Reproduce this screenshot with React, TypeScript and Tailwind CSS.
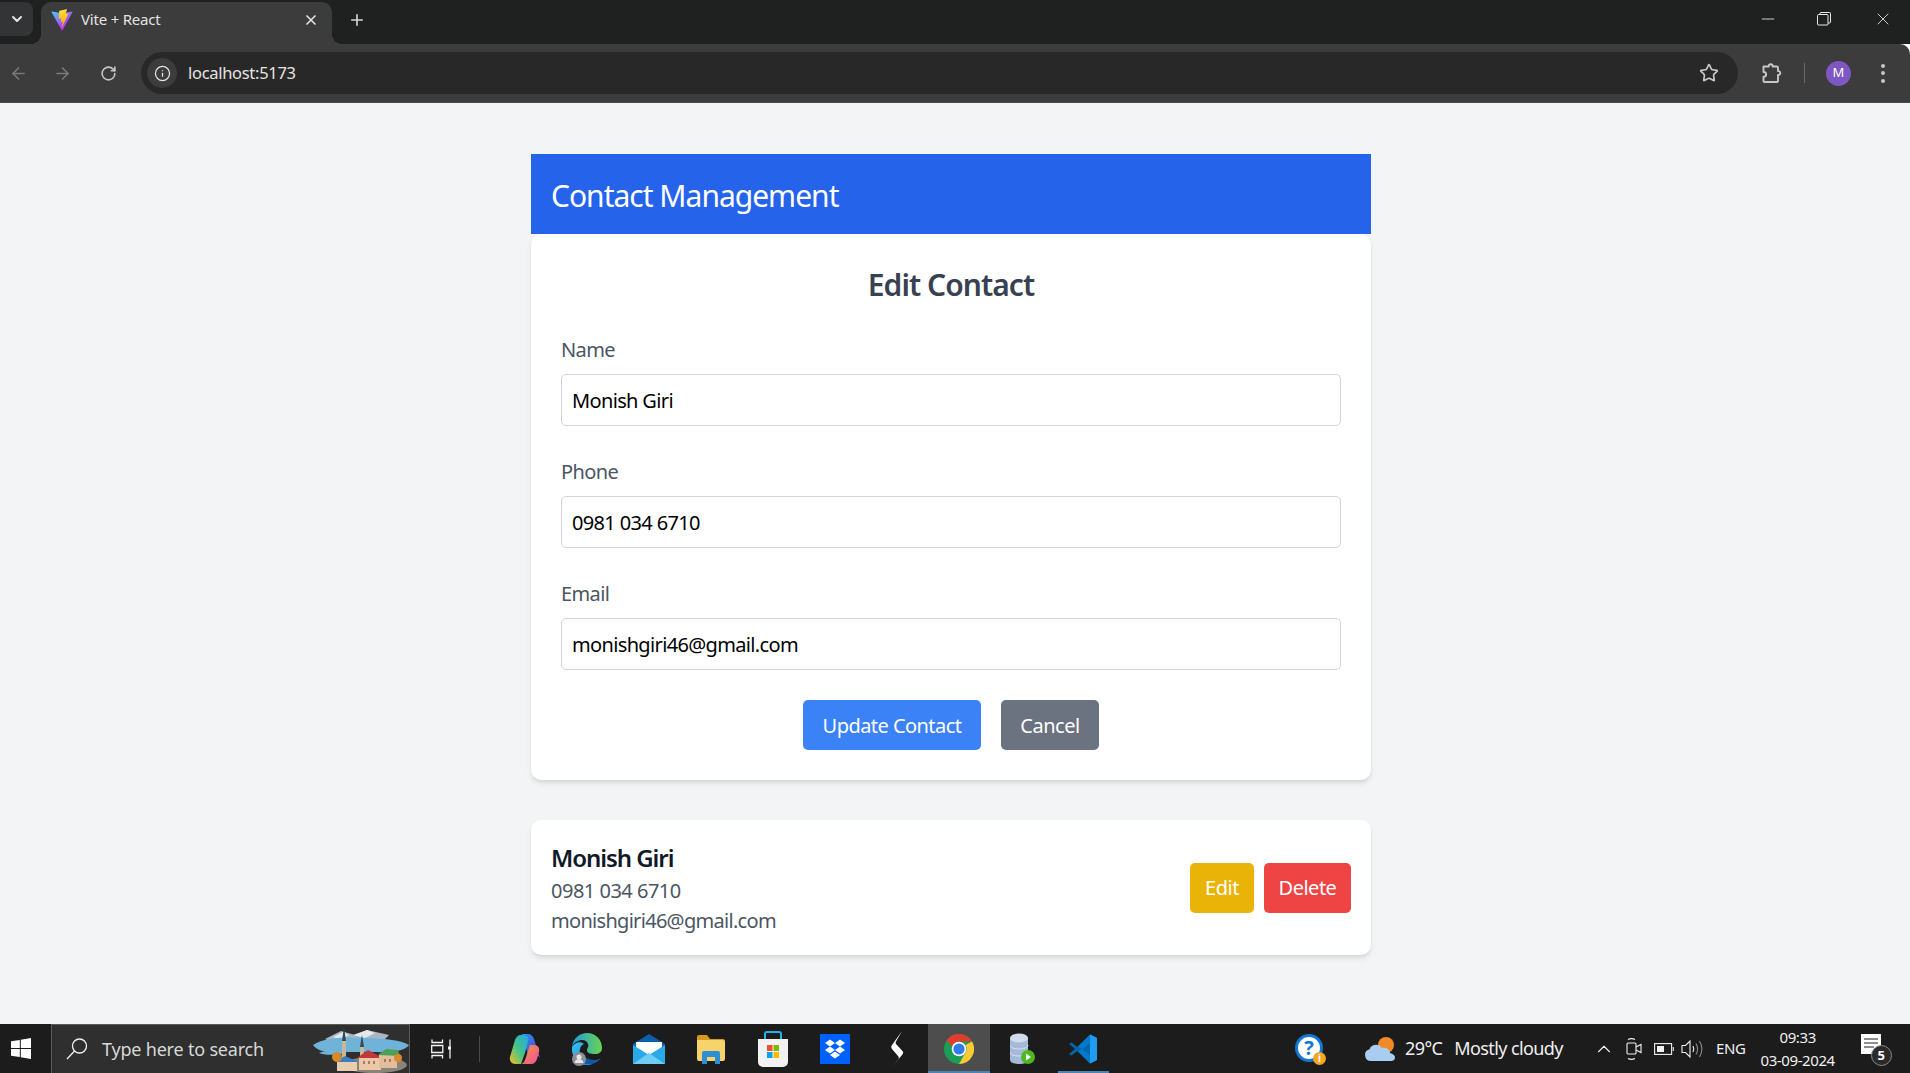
import React from 'react';
import {
  ArrowLeft,
  ArrowRight,
  ChevronDown,
  ChevronUp,
  Info,
  Minus,
  Plus,
  RotateCw,
  Star,
  X,
} from 'lucide-react';

const sans = 'font-["Noto_Sans",sans-serif]';

function ViteLogo() {
  return (
    <svg width="22" height="22" viewBox="0 0 410 404">
      <defs>
        <linearGradient id="viteA" x1="6" y1="33" x2="235" y2="344" gradientUnits="userSpaceOnUse">
          <stop offset="0" stopColor="#41D1FF" />
          <stop offset="1" stopColor="#BD34FE" />
        </linearGradient>
        <linearGradient id="viteB" x1="194" y1="8" x2="236" y2="292" gradientUnits="userSpaceOnUse">
          <stop offset="0" stopColor="#FFEA83" />
          <stop offset="0.08" stopColor="#FFDD35" />
          <stop offset="1" stopColor="#FFA800" />
        </linearGradient>
      </defs>
      <path d="M399.6 59.5L215.9 388c-3.8 6.8-13.5 6.8-17.4.1L11.2 59.5C7 52.2 13.3 43.3 21.6 44.8l183.9 32.9c1.2.2 2.4.2 3.5 0l180-32.8c8.3-1.5 14.6 7.3 10.6 14.6z" fill="url(#viteA)" />
      <path d="M292.9 1.6L156.9 28.2c-2.2.4-3.9 2.3-4 4.6l-8.4 141.2c-.2 3.3 2.8 5.9 6.1 5.1l37.9-8.7c3.5-.8 6.7 2.3 6 5.9l-11.3 55.2c-.8 3.7 2.7 6.9 6.3 5.8l23.4-7.1c3.6-1.1 7.1 2.1 6.3 5.8l-17.9 86.6c-1.1 5.4 6.1 8.4 9.1 3.7l2-3.1L323.8 87.5c1.9-3.7-1.3-8-5.4-7.2l-38.8 7.5c-3.6.7-6.7-2.7-5.7-6.3l25.4-73.8c1-3.5-2.1-6.9-5.8-6.1z" fill="url(#viteB)" />
    </svg>
  );
}

function RestoreIcon() {
  return (
    <svg width="14" height="14" viewBox="0 0 14 14" fill="none" stroke="#e8e8e8" strokeWidth="1">
      <rect x="0.5" y="2.5" width="10.5" height="10.5" rx="1" />
      <path d="M3 2.5V1.5a1 1 0 0 1 1-1h8.5a1 1 0 0 1 1 1V10a1 1 0 0 1-1 1H11" />
    </svg>
  );
}

function ExtensionIcon() {
  return (
    <svg width="22" height="22" viewBox="0 0 22 22" fill="none" stroke="#c7c7c7" strokeWidth="1.9" strokeLinejoin="round">
      <path d="M2.5 4.5h5.2c0-3 4-3 4 0h4.3a1 1 0 0 1 1 1v3.6c3-.2 3 4.1 0 3.9v6a1 1 0 0 1-1 1H3.5a1 1 0 0 1-1-1v-4.3c1.900 0 2.600-1.200 2.600-2.300S4.400 10 2.500 10z" />
    </svg>
  );
}

function WindowsLogo() {
  return (
    <svg width="20" height="21" viewBox="0 0 20 21" fill="#fff">
      <path d="M0 3.200 8.800 1.900v8H0zM9.800 1.700 20 0v9.900H9.800zM0 11h8.800v8L0 17.800zM9.800 11H20v10L9.800 19.300z" />
    </svg>
  );
}

function SearchGlass() {
  return (
    <svg width="22" height="22" viewBox="0 0 22 22" fill="none" stroke="#f0f0f0" strokeWidth="1.300">
      <circle cx="13.500" cy="8" r="7" />
      <path d="M8.500 13 1 21" />
    </svg>
  );
}

function TaskViewIcon() {
  return (
    <svg width="20" height="20" viewBox="0 0 20 20" fill="none" stroke="#f2f2f2" strokeWidth="1.300">
      <path d="M1 .5v3h10.500v-3M1 19.500v-3h10.500v3M.7 6.500h11.100v7H.7zM19 .5v19" />
      <rect x="17" y="7.500" width="3" height="3" fill="#f2f2f2" stroke="none" />
    </svg>
  );
}

function CityScene() {
  return (
    <svg width="96" height="48" viewBox="0 0 96 48">
      <path d="M12 14 28 6l14 4 12-5 22 5-8 8H20z" fill="#a9b6c4" />
      <path d="M40 10l14-5 8 3-10 5zM20 12l10-5 6 3-8 5z" fill="#e5e9ee" />
      <path d="M0 20c12-8 34-8 54-7 16 1 32 1 42 7-4 6-18 8-32 7H14C8 26 3 24 0 20z" fill="#6fb3d9" />
      <path d="M6 28c8-3 20-3 28-1-6 3-22 4-28 1z" fill="#6fb3d9" />
      <ellipse cx="62" cy="40" rx="32" ry="8" fill="#8a8378" />
      <path d="M31 2l2 14h-4z" fill="#33485f" />
      <rect x="29" y="16" width="4" height="18" fill="#c8b89a" />
      <path d="M49 10l2 12h-4z" fill="#33485f" />
      <rect x="47" y="22" width="4" height="10" fill="#c8b89a" />
      <rect x="46" y="32" width="22" height="13" fill="#ecc7a8" />
      <path d="M44 33l11-8 15 8z" fill="#c0383a" />
      <rect x="66" y="30" width="18" height="13" fill="#e2bd9c" />
      <path d="M65 30l8-6 12 1 2 6z" fill="#4f9f57" />
      <rect x="24" y="36" width="20" height="10" fill="#e9cdb2" />
      <path d="M22 37l10-6 14 6z" fill="#3b7fc0" />
      <circle cx="24" cy="32" r="5" fill="#d88a28" />
      <circle cx="85" cy="33" r="4" fill="#d88a28" />
      <g fill="#a9786a">
        <rect x="50" y="36" width="2" height="3" />
        <rect x="55" y="36" width="2" height="3" />
        <rect x="60" y="36" width="2" height="3" />
        <rect x="71" y="34" width="2" height="3" />
        <rect x="76" y="34" width="2" height="3" />
      </g>
    </svg>
  );
}

function CopilotIcon() {
  return (
    <svg width="32" height="32" viewBox="0 0 32 32">
      <defs>
        <linearGradient id="copA" x1="0" y1="0" x2="1" y2="1">
          <stop offset="0" stopColor="#1d9bf0" />
          <stop offset="0.55" stopColor="#4c5fe0" />
          <stop offset="1" stopColor="#a83fd0" />
        </linearGradient>
        <linearGradient id="copB" x1="0" y1="1" x2="1" y2="0">
          <stop offset="0" stopColor="#f2c11e" />
          <stop offset="0.5" stopColor="#3fc58a" />
          <stop offset="1" stopColor="#2aa5e8" />
        </linearGradient>
        <linearGradient id="copC" x1="0" y1="0" x2="1" y2="1">
          <stop offset="0" stopColor="#f59a3c" />
          <stop offset="1" stopColor="#f0509a" />
        </linearGradient>
      </defs>
      <path d="M13 1h6c3 0 5 2 6 5l6 19c-1-2-3-3-5-3h-7L13 1z" fill="url(#copA)" />
      <path d="M12 2c-3 0-5 2-6 5L1 24c-1 4 2 7 5 7h6l4-11 3-12c1-3 0-6-7-6z" fill="url(#copB)" />
      <path d="M17 12h8c4 0 6 3 5 7l-2 7c-1 3-3 5-6 5H11c3 0 4-2 5-4l5-15z" fill="url(#copC)" />
    </svg>
  );
}

function EdgeIcon() {
  return (
    <svg width="32" height="34" viewBox="0 0 32 34">
      <defs>
        <linearGradient id="edgeA" x1="0" y1="0" x2="1" y2="1">
          <stop offset="0" stopColor="#35c1f1" />
          <stop offset="1" stopColor="#1f8fd8" />
        </linearGradient>
        <linearGradient id="edgeB" x1="0" y1="0" x2="1" y2="0">
          <stop offset="0" stopColor="#1b9de2" />
          <stop offset="1" stopColor="#6ad44f" />
        </linearGradient>
      </defs>
      <path d="M1 15C2 6 9 1 16 1c9 0 15 7 15 15 0 4-3 6-7 6-5 0-8-1-8-4 0-2 2-3 1-6-1-4-6-5-10-3-3 1-5 3-6 6z" fill="url(#edgeB)" />
      <path d="M1 15c3-5 9-6 12-3-3 1-5 5-4 10 1 6 6 10 13 10-3 1-5 1-7 1C7 33 0 25 1 15z" fill="url(#edgeA)" />
      <path d="M14 32c5 1 12 0 16-6-3 2-8 3-12 1-4-1-6-4-6-7-2 4-1 10 2 12z" fill="#0c59a4" />
      <circle cx="8" cy="27" r="7" fill="#8a8f96" />
      <circle cx="8" cy="25" r="2.500" fill="#e7e7e7" />
      <path d="M3.500 31c.5-3 2.500-4 4.500-4s4 1 4.500 4z" fill="#e7e7e7" />
    </svg>
  );
}

function MailIcon() {
  return (
    <svg width="32" height="30" viewBox="0 0 32 30">
      <path d="M0 10 16 0l16 10v4H0z" fill="#0f5ea8" />
      <path d="M3 8h26v12H3z" fill="#fff" />
      <path d="M0 11l16 10 16-10v19H0z" fill="#29a8ea" />
      <path d="M0 30l16-11 16 11z" fill="#6fcdf5" />
    </svg>
  );
}

function FolderIcon() {
  return (
    <svg width="28" height="30" viewBox="0 0 28 30">
      <path d="M0 3a2 2 0 0 1 2-2h8l3 4h13a2 2 0 0 1 2 2v4H0z" fill="#d99a1c" />
      <path d="M0 6h26a2 2 0 0 1 2 2v17a2 2 0 0 1-2 2H2a2 2 0 0 1-2-2z" fill="#f6d36b" />
      <path d="M5 30V19a2 2 0 0 1 2-2h14a2 2 0 0 1 2 2v11h-5v-7h-8v7z" fill="#2f8fd6" />
    </svg>
  );
}

function StoreIcon() {
  return (
    <svg width="30" height="36" viewBox="0 0 30 36">
      <path d="M7 8V3a2 2 0 0 1 2-2h12a2 2 0 0 1 2 2v5" fill="none" stroke="#22b3ee" strokeWidth="2" />
      <path d="M0 8h30v23a5 5 0 0 1-5 5H5a5 5 0 0 1-5-5z" fill="#f2f2f2" />
      <rect x="9" y="14" width="5.500" height="6" fill="#f25022" />
      <rect x="15.500" y="14" width="5.500" height="6" fill="#7fba00" />
      <rect x="9" y="21" width="5.500" height="6" fill="#00a4ef" />
      <rect x="15.500" y="21" width="5.500" height="6" fill="#ffb900" />
    </svg>
  );
}

function DropboxIcon() {
  return (
    <svg width="30" height="30" viewBox="0 0 30 30">
      <rect width="30" height="30" fill="#0061fe" />
      <path fill="#fff" d="M10 5.500 15 9l-5 3.500L5 9zM20 5.500 25 9l-5 3.500L15 9zM10 12.500l5 3.500-5 3.500L5 16zM20 12.500 25 16l-5 3.500L15 16zM15 17.500l5 3.500-5 3.500-5-3.500z" />
    </svg>
  );
}

function BoltIcon() {
  return (
    <svg width="14" height="36" viewBox="0 0 14 36" fill="#fff">
      <path d="M12 0 2 14c-1 1.500-1 2.500 0 4l6 7c1 1.200 1 2 .5 3L2 36l10-12c1.500-2 1.500-3 0-4.500L6 13c-.5-1-.5-1.500 0-2.500z" />
    </svg>
  );
}

function ChromeIcon() {
  return (
    <svg width="30" height="30" viewBox="0 0 30 30">
      <circle cx="15" cy="15" r="15" fill="#1a9e55" />
      <path d="M15 0a15 15 0 0 1 13 7.500H15a7.500 7.500 0 0 0-7 4.800L2.500 6.500A15 15 0 0 1 15 0z" fill="#e33b2e" />
      <path d="M28 7.500A15 15 0 0 1 15 30l6.500-11.200A7.500 7.500 0 0 0 21.500 11z" fill="#fcc934" />
      <circle cx="15" cy="15" r="7.300" fill="#fff" />
      <circle cx="15" cy="15" r="5.600" fill="#2f7bea" />
    </svg>
  );
}

function DatabaseIcon() {
  return (
    <svg width="26" height="32" viewBox="0 0 26 32" className="ml-[3px]">
      <path d="M0 5v22c0 2.500 4 4 9 4s9-1.500 9-4V5z" fill="#a4bad6" />
      <path d="M0 12c0 2.500 4 4 9 4s9-1.500 9-4M0 19c0 2.500 4 4 9 4s9-1.500 9-4" fill="none" stroke="#d6e2f0" strokeWidth="1" />
      <ellipse cx="9" cy="5" rx="9" ry="4.500" fill="#cfdcec" />
      <circle cx="18" cy="24" r="7" fill="#4fb81f" />
      <path d="M16 20.500v7l5-3.500z" fill="#fff" />
    </svg>
  );
}

function VsCodeIcon() {
  return (
    <svg width="30" height="30" viewBox="0 0 30 30">
      <path d="M22 .500 9.500 13 3.500 8.500 1 10l6 5-6 5 2.500 1.500 6-4.500L22 29.500z" fill="#0065a9" />
      <path d="M22 .500 29 4v22l-7 3.500L9.500 17l5-2 7.500 6V9l-7.500 6-5-2z" fill="#007acc" />
      <path d="M22 .500 29 4v22l-7 3.500z" fill="#1f9cf0" />
    </svg>
  );
}

function HelpIcon() {
  return (
    <div className="relative w-[30px] h-[30px]">
      <div className={`w-[28px] h-[28px] rounded-full bg-white border-[3px] border-[#0f78d4] flex items-center justify-center text-[#0f78d4] text-[20px] font-bold leading-none ${sans}`}>
        ?
      </div>
      <div className={`absolute right-[-1px] bottom-[-1px] w-[13px] h-[13px] rounded-full bg-[#f5a623] flex items-center justify-center text-white text-[10px] font-bold leading-none ${sans}`}>
        i
      </div>
    </div>
  );
}

function WeatherIcon() {
  return (
    <svg width="32" height="26" viewBox="0 0 32 26">
      <circle cx="22" cy="9" r="8" fill="#f08a24" />
      <path d="M7 25a6 6 0 0 1-1.500-11.800C7 8 15 7 18 12c5-1 8 2 8 5 3 .5 5 2.500 5 4.500 0 2-1.500 3.500-4 3.500z" fill="#a9cdf0" />
    </svg>
  );
}

function CameraIcon() {
  return (
    <svg width="16" height="24" viewBox="0 0 16 24" fill="none" stroke="#f0f0f0" strokeWidth="1.100">
      <rect x="1" y="6" width="9" height="11" rx="1" />
      <path d="M10 10l5-2.500v8L10 13" />
      <path d="M2 2.500c2-1 5-1 7 0M2 21.500c2 1 5 1 7 0" />
    </svg>
  );
}

function BatteryIcon() {
  return (
    <svg width="20" height="12" viewBox="0 0 20 12" fill="none" stroke="#f0f0f0" strokeWidth="1.100">
      <rect x="0.600" y="0.600" width="17" height="10.800" />
      <rect x="3" y="3" width="7" height="6" fill="#f0f0f0" stroke="none" />
      <path d="M19.300 4v4" />
    </svg>
  );
}

function SpeakerIcon() {
  return (
    <svg width="22" height="20" viewBox="0 0 22 20" fill="none" stroke="#f0f0f0" strokeWidth="1.100">
      <path d="M1 6.500h3.500L9 2v16l-4.500-4.500H1z" />
      <path d="M12 7c1 2 1 4 0 6" />
      <path d="M15 4.500c2 3.500 2 7.500 0 11M18.500 2c3 5 3 11 0 16" stroke="#8b8b8b" />
    </svg>
  );
}

function NotificationIcon() {
  return (
    <div className="relative w-[32px] h-[32px]">
      <svg width="20" height="20" viewBox="0 0 20 20" className="mt-[1px]">
        <path d="M0 0h20v20H0z" fill="#fff" />
        <path d="M3 5h14M3 9h14M3 13h10" stroke="#1c1c1c" strokeWidth="1.200" />
      </svg>
      <div className={`absolute right-[1px] bottom-[-1px] w-[21px] h-[21px] rounded-full bg-[#2a2a2a] border border-[#8a8a8a] flex items-center justify-center text-white text-[13px] font-bold leading-none ${sans}`}>
        5
      </div>
    </div>
  );
}

function BrowserChrome() {
  return (
    <div className={`shrink-0 ${sans}`}>
      <div className="h-[44px] bg-[#1f2020] flex">
        <div className="w-[41px] pt-[2px]">
          <div className="w-[33px] h-[34px] rounded-r-lg bg-[#333435] flex items-center justify-center">
            <ChevronDown size={16} strokeWidth={3} color="#e3e3e3" />
          </div>
        </div>
        <div className="relative w-[291px] mt-[2px] pb-[7px] rounded-t-[10px] bg-[#3c3c3c] flex items-center pl-[10px] pr-[13px]">
          <span className="absolute left-[-10px] bottom-0 w-[10px] h-[10px] bg-[radial-gradient(circle_at_0_0,transparent_10px,#3c3c3c_10px)]" />
          <span className="absolute right-[-10px] bottom-0 w-[10px] h-[10px] bg-[radial-gradient(circle_at_100%_0,transparent_10px,#3c3c3c_10px)]" />
          <ViteLogo />
          <span className="ml-[8px] text-[15px] text-[#e3e3e3] flex-1 tracking-[-0.2px]">Vite + React</span>
          <X size={16} strokeWidth={2.5} color="#e3e3e3" />
        </div>
        <div className="ml-[10px] mt-[2px] pb-[7px] w-[30px] flex items-center justify-center">
          <Plus size={18} strokeWidth={2.2} color="#d5d5d5" />
        </div>
        <div className="flex-1" />
        <div className="flex items-center pb-[6px]">
          <div className="w-[48px] flex justify-center"><Minus size={20} strokeWidth={1} color="#f0f0f0" /></div>
          <div className="w-[64px] flex justify-center"><RestoreIcon /></div>
          <div className="w-[54px] flex justify-center"><X size={20} strokeWidth={1} color="#f0f0f0" /></div>
        </div>
      </div>
      <div className="h-[59px] bg-[#3c3c3c] rounded-tr-[10px] border-b border-[#4a4a4a] flex items-center">
        <div className="w-[36px] flex justify-center"><ArrowLeft size={19} color="#7a7a7a" /></div>
        <div className="w-[52px] flex justify-center"><ArrowRight size={19} color="#7a7a7a" /></div>
        <div className="w-[40px] flex justify-center"><RotateCw size={17} strokeWidth={2.2} color="#c7c7c7" /></div>
        <div className="ml-[13px] w-[1597px] h-[42px] rounded-full bg-[#282828] flex items-center pl-[6px] pr-[19px]">
          <div className="w-[30px] h-[30px] rounded-full bg-[#3c3c3c] flex items-center justify-center">
            <Info size={17} strokeWidth={1.8} color="#e3e3e3" />
          </div>
          <span className="ml-[11px] text-[16.5px] text-[#e3e3e3] flex-1 tracking-[-0.3px]">localhost:5173</span>
          <Star size={20} strokeWidth={2} color="#c7c7c7" />
        </div>
        <div className="ml-[23px] w-[22px] flex justify-center"><ExtensionIcon /></div>
        <div className="ml-[21px] w-px h-[20px] bg-[#6a6a6a]" />
        <div className="ml-[21px] w-[25px] h-[25px] rounded-full bg-[#7e57c2] flex items-center justify-center text-[13px] text-white">M</div>
        <div className="ml-[30px] flex flex-col gap-[3.500px]">
          <span className="w-[4px] h-[4px] rounded-full bg-[#c7c7c7]" />
          <span className="w-[4px] h-[4px] rounded-full bg-[#c7c7c7]" />
          <span className="w-[4px] h-[4px] rounded-full bg-[#c7c7c7]" />
        </div>
      </div>
    </div>
  );
}

function Field({ label, value, last }: { label: string; value: string; last?: boolean }) {
  return (
    <div className={last ? 'mb-[30px]' : 'mb-[31px]'}>
      <label className="block mb-[9px] text-[20px] leading-[30px] text-[#4b5563] tracking-[-0.6px]">{label}</label>
      <input
        readOnly
        value={value}
        className="block w-full h-[52px] px-[10px] border border-[#d1d5db] rounded-[5px] bg-white text-[20px] text-black tracking-[-0.65px] outline-none"
      />
    </div>
  );
}

function ContactPage() {
  return (
    <main className={`flex-1 min-h-0 bg-[#f3f4f6] pt-[51px] pr-[8px] ${sans}`}>
      <div className="w-[840px] mx-auto">
        <header className="h-[80px] bg-[#2563eb] px-[20px] pt-[3px] flex items-center">
          <h1 className="text-[30px] leading-[40px] text-white tracking-[-1px]">Contact Management</h1>
        </header>

        <div className="bg-white rounded-[10px] shadow-md p-[30px]">
          <h2 className="pt-[1px] h-[40px] text-[30px] leading-[40px] font-semibold text-center text-[#374151] mb-[31px] tracking-[-0.95px]">Edit Contact</h2>
          <Field label="Name" value="Monish Giri" />
          <Field label="Phone" value="0981 034 6710" />
          <Field label="Email" value="monishgiri46@gmail.com" last />
          <div className="flex justify-center gap-[20px]">
            <button className="h-[50px] w-[178px] pt-[1px] rounded-[5px] bg-[#3b82f6] text-[20px] text-white tracking-[-0.55px]">Update Contact</button>
            <button className="h-[50px] w-[98px] pt-[1px] rounded-[5px] bg-[#6b7280] text-[20px] text-white tracking-[-0.5px]">Cancel</button>
          </div>
        </div>

        <div className="mt-[40px] bg-white rounded-[10px] shadow-md p-[20px] flex items-center justify-between">
          <div>
            <p className="text-[24px] leading-[35px] font-semibold text-[#111827] tracking-[-1.05px]">Monish Giri</p>
            <p className="pt-[1px] h-[30px] text-[20px] leading-[30px] text-[#4b5563] tracking-[-0.5px]">0981 034 6710</p>
            <p className="pt-[1px] h-[30px] text-[20px] leading-[30px] text-[#4b5563] tracking-[-0.7px]">monishgiri46@gmail.com</p>
          </div>
          <div className="flex gap-[10px]">
            <button className="h-[50px] w-[64px] pt-[1px] rounded-[5px] bg-[#eab308] text-[20px] text-white tracking-[-0.5px]">Edit</button>
            <button className="h-[50px] w-[87px] pt-[1px] rounded-[5px] bg-[#ef4444] text-[20px] text-white tracking-[-0.5px]">Delete</button>
          </div>
        </div>
      </div>
    </main>
  );
}

function Taskbar() {
  const apps = [
    { key: 'copilot', icon: <CopilotIcon /> },
    { key: 'edge', icon: <EdgeIcon /> },
    { key: 'mail', icon: <MailIcon /> },
    { key: 'folder', icon: <FolderIcon /> },
    { key: 'store', icon: <StoreIcon /> },
    { key: 'dropbox', icon: <DropboxIcon /> },
    { key: 'bolt', icon: <BoltIcon /> },
    { key: 'chrome', icon: <ChromeIcon />, active: true },
    { key: 'db', icon: <DatabaseIcon /> },
    { key: 'vscode', icon: <VsCodeIcon />, open: true },
  ];

  return (
    <footer className={`shrink-0 h-[49px] bg-[#1c1c1c] flex items-stretch text-[#f0f0f0] ${sans}`}>
      <div className="w-[51px] pr-[9px] flex items-center justify-center"><WindowsLogo /></div>
      <div className="w-[359px] bg-[#2f2f2f] border-l border-t border-r border-[#5a5a5a] flex items-center pl-[14px] overflow-hidden">
        <SearchGlass />
        <span className="ml-[14px] text-[18px] text-[#d8d8d8] tracking-[-0.2px] flex-1">Type here to search</span>
        <CityScene />
      </div>
      <div className="w-[84px] flex items-center pl-[21px]">
        <TaskViewIcon />
        <div className="ml-[28px] w-px h-[26px] bg-[#4a4a4a]" />
      </div>
      {apps.map((app) => (
        <div
          key={app.key}
          className={`w-[62px] flex items-center justify-center relative ${app.active ? 'bg-[#4d4d4d]' : ''}`}
        >
          {app.icon}
          {(app.active || app.open) && (
            <span className={`absolute bottom-0 h-[2px] bg-[#4a84b5] ${app.active ? 'left-0 right-0' : 'left-[6px] right-[5px]'}`} />
          )}
        </div>
      ))}
      <div className="ml-[181px] w-[30px] flex items-center justify-center"><HelpIcon /></div>
      <div className="ml-[39px] flex items-center">
        <WeatherIcon />
        <span className="ml-[9px] text-[18px] tracking-[-0.6px]">29°C</span>
        <span className="ml-[12px] text-[18px] tracking-[-0.6px]">Mostly cloudy</span>
      </div>
      <div className="ml-[30px] flex items-center"><ChevronUp size={22} strokeWidth={1.2} color="#f0f0f0" /></div>
      <div className="ml-[11px] flex items-center"><CameraIcon /></div>
      <div className="ml-[12px] flex items-center"><BatteryIcon /></div>
      <div className="ml-[7px] flex items-center"><SpeakerIcon /></div>
      <div className="ml-[13px] flex items-center text-[15px] tracking-[-0.3px]">ENG</div>
      <div className="ml-[13px] w-[78px] flex flex-col items-center justify-center text-[15px] leading-[23px] tracking-[-0.4px]">
        <span>09:33</span>
        <span>03-09-2024</span>
      </div>
      <div className="ml-[24px] flex items-center"><NotificationIcon /></div>
    </footer>
  );
}

export default function App() {
  return (
    <div className="h-screen flex flex-col overflow-hidden">
      <BrowserChrome />
      <ContactPage />
      <Taskbar />
    </div>
  );
}
